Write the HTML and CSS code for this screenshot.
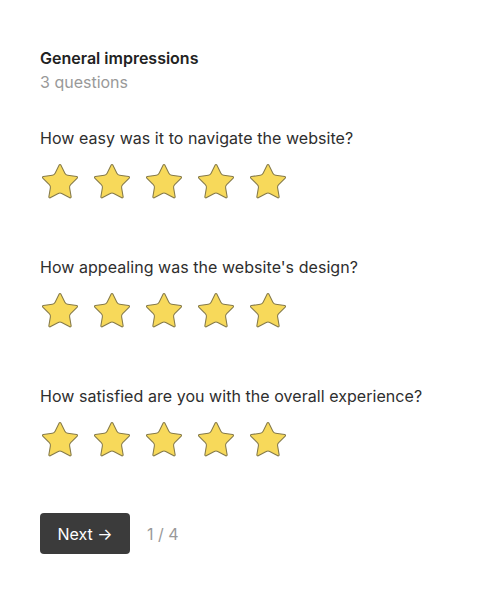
FILE: index.html
```html
<!DOCTYPE html>
<html>
<head>
<meta charset="utf-8">
<link rel="stylesheet" href="styles.css">
</head>
<body>
<main class="survey">
  <header class="head">
    <h1 class="title">General impressions</h1>
    <p class="sub">3 questions</p>
  </header>
  <section class="q">
    <p class="q-text">How easy was it to navigate the website?</p>
    <div class="stars">
      <svg class="star" viewBox="0 0 24 24"><path d="M11.525 2.295a.53.53 0 0 1 .95 0l2.31 4.679a2.123 2.123 0 0 0 1.595 1.16l5.166.756a.53.53 0 0 1 .294.904l-3.736 3.638a2.123 2.123 0 0 0-.611 1.878l.882 5.14a.53.53 0 0 1-.771.56l-4.618-2.428a2.122 2.122 0 0 0-1.973 0L6.396 21.01a.53.53 0 0 1-.77-.56l.881-5.139a2.122 2.122 0 0 0-.611-1.879L2.16 9.795a.53.53 0 0 1 .294-.906l5.165-.755a2.122 2.122 0 0 0 1.597-1.160z"/></svg>
      <svg class="star" viewBox="0 0 24 24"><path d="M11.525 2.295a.53.53 0 0 1 .95 0l2.31 4.679a2.123 2.123 0 0 0 1.595 1.16l5.166.756a.53.53 0 0 1 .294.904l-3.736 3.638a2.123 2.123 0 0 0-.611 1.878l.882 5.14a.53.53 0 0 1-.771.56l-4.618-2.428a2.122 2.122 0 0 0-1.973 0L6.396 21.01a.53.53 0 0 1-.77-.56l.881-5.139a2.122 2.122 0 0 0-.611-1.879L2.16 9.795a.53.53 0 0 1 .294-.906l5.165-.755a2.122 2.122 0 0 0 1.597-1.160z"/></svg>
      <svg class="star" viewBox="0 0 24 24"><path d="M11.525 2.295a.53.53 0 0 1 .95 0l2.31 4.679a2.123 2.123 0 0 0 1.595 1.16l5.166.756a.53.53 0 0 1 .294.904l-3.736 3.638a2.123 2.123 0 0 0-.611 1.878l.882 5.14a.53.53 0 0 1-.771.56l-4.618-2.428a2.122 2.122 0 0 0-1.973 0L6.396 21.01a.53.53 0 0 1-.77-.56l.881-5.139a2.122 2.122 0 0 0-.611-1.879L2.16 9.795a.53.53 0 0 1 .294-.906l5.165-.755a2.122 2.122 0 0 0 1.597-1.160z"/></svg>
      <svg class="star" viewBox="0 0 24 24"><path d="M11.525 2.295a.53.53 0 0 1 .95 0l2.31 4.679a2.123 2.123 0 0 0 1.595 1.16l5.166.756a.53.53 0 0 1 .294.904l-3.736 3.638a2.123 2.123 0 0 0-.611 1.878l.882 5.14a.53.53 0 0 1-.771.56l-4.618-2.428a2.122 2.122 0 0 0-1.973 0L6.396 21.01a.53.53 0 0 1-.77-.56l.881-5.139a2.122 2.122 0 0 0-.611-1.879L2.16 9.795a.53.53 0 0 1 .294-.906l5.165-.755a2.122 2.122 0 0 0 1.597-1.160z"/></svg>
      <svg class="star" viewBox="0 0 24 24"><path d="M11.525 2.295a.53.53 0 0 1 .95 0l2.31 4.679a2.123 2.123 0 0 0 1.595 1.16l5.166.756a.53.53 0 0 1 .294.904l-3.736 3.638a2.123 2.123 0 0 0-.611 1.878l.882 5.14a.53.53 0 0 1-.771.56l-4.618-2.428a2.122 2.122 0 0 0-1.973 0L6.396 21.01a.53.53 0 0 1-.77-.56l.881-5.139a2.122 2.122 0 0 0-.611-1.879L2.16 9.795a.53.53 0 0 1 .294-.906l5.165-.755a2.122 2.122 0 0 0 1.597-1.160z"/></svg>
    </div>
  </section>
  <section class="q">
    <p class="q-text">How appealing was the website's design?</p>
    <div class="stars">
      <svg class="star" viewBox="0 0 24 24"><path d="M11.525 2.295a.53.53 0 0 1 .95 0l2.31 4.679a2.123 2.123 0 0 0 1.595 1.16l5.166.756a.53.53 0 0 1 .294.904l-3.736 3.638a2.123 2.123 0 0 0-.611 1.878l.882 5.14a.53.53 0 0 1-.771.56l-4.618-2.428a2.122 2.122 0 0 0-1.973 0L6.396 21.01a.53.53 0 0 1-.77-.56l.881-5.139a2.122 2.122 0 0 0-.611-1.879L2.16 9.795a.53.53 0 0 1 .294-.906l5.165-.755a2.122 2.122 0 0 0 1.597-1.160z"/></svg>
      <svg class="star" viewBox="0 0 24 24"><path d="M11.525 2.295a.53.53 0 0 1 .95 0l2.31 4.679a2.123 2.123 0 0 0 1.595 1.16l5.166.756a.53.53 0 0 1 .294.904l-3.736 3.638a2.123 2.123 0 0 0-.611 1.878l.882 5.14a.53.53 0 0 1-.771.56l-4.618-2.428a2.122 2.122 0 0 0-1.973 0L6.396 21.01a.53.53 0 0 1-.77-.56l.881-5.139a2.122 2.122 0 0 0-.611-1.879L2.16 9.795a.53.53 0 0 1 .294-.906l5.165-.755a2.122 2.122 0 0 0 1.597-1.160z"/></svg>
      <svg class="star" viewBox="0 0 24 24"><path d="M11.525 2.295a.53.53 0 0 1 .95 0l2.31 4.679a2.123 2.123 0 0 0 1.595 1.16l5.166.756a.53.53 0 0 1 .294.904l-3.736 3.638a2.123 2.123 0 0 0-.611 1.878l.882 5.14a.53.53 0 0 1-.771.56l-4.618-2.428a2.122 2.122 0 0 0-1.973 0L6.396 21.01a.53.53 0 0 1-.77-.56l.881-5.139a2.122 2.122 0 0 0-.611-1.879L2.16 9.795a.53.53 0 0 1 .294-.906l5.165-.755a2.122 2.122 0 0 0 1.597-1.160z"/></svg>
      <svg class="star" viewBox="0 0 24 24"><path d="M11.525 2.295a.53.53 0 0 1 .95 0l2.31 4.679a2.123 2.123 0 0 0 1.595 1.16l5.166.756a.53.53 0 0 1 .294.904l-3.736 3.638a2.123 2.123 0 0 0-.611 1.878l.882 5.14a.53.53 0 0 1-.771.56l-4.618-2.428a2.122 2.122 0 0 0-1.973 0L6.396 21.01a.53.53 0 0 1-.77-.56l.881-5.139a2.122 2.122 0 0 0-.611-1.879L2.16 9.795a.53.53 0 0 1 .294-.906l5.165-.755a2.122 2.122 0 0 0 1.597-1.160z"/></svg>
      <svg class="star" viewBox="0 0 24 24"><path d="M11.525 2.295a.53.53 0 0 1 .95 0l2.31 4.679a2.123 2.123 0 0 0 1.595 1.16l5.166.756a.53.53 0 0 1 .294.904l-3.736 3.638a2.123 2.123 0 0 0-.611 1.878l.882 5.14a.53.53 0 0 1-.771.56l-4.618-2.428a2.122 2.122 0 0 0-1.973 0L6.396 21.01a.53.53 0 0 1-.77-.56l.881-5.139a2.122 2.122 0 0 0-.611-1.879L2.16 9.795a.53.53 0 0 1 .294-.906l5.165-.755a2.122 2.122 0 0 0 1.597-1.160z"/></svg>
    </div>
  </section>
  <section class="q">
    <p class="q-text">How satisfied are you with the overall experience?</p>
    <div class="stars">
      <svg class="star" viewBox="0 0 24 24"><path d="M11.525 2.295a.53.53 0 0 1 .95 0l2.31 4.679a2.123 2.123 0 0 0 1.595 1.16l5.166.756a.53.53 0 0 1 .294.904l-3.736 3.638a2.123 2.123 0 0 0-.611 1.878l.882 5.14a.53.53 0 0 1-.771.56l-4.618-2.428a2.122 2.122 0 0 0-1.973 0L6.396 21.01a.53.53 0 0 1-.77-.56l.881-5.139a2.122 2.122 0 0 0-.611-1.879L2.16 9.795a.53.53 0 0 1 .294-.906l5.165-.755a2.122 2.122 0 0 0 1.597-1.160z"/></svg>
      <svg class="star" viewBox="0 0 24 24"><path d="M11.525 2.295a.53.53 0 0 1 .95 0l2.31 4.679a2.123 2.123 0 0 0 1.595 1.16l5.166.756a.53.53 0 0 1 .294.904l-3.736 3.638a2.123 2.123 0 0 0-.611 1.878l.882 5.14a.53.53 0 0 1-.771.56l-4.618-2.428a2.122 2.122 0 0 0-1.973 0L6.396 21.01a.53.53 0 0 1-.77-.56l.881-5.139a2.122 2.122 0 0 0-.611-1.879L2.16 9.795a.53.53 0 0 1 .294-.906l5.165-.755a2.122 2.122 0 0 0 1.597-1.160z"/></svg>
      <svg class="star" viewBox="0 0 24 24"><path d="M11.525 2.295a.53.53 0 0 1 .95 0l2.31 4.679a2.123 2.123 0 0 0 1.595 1.16l5.166.756a.53.53 0 0 1 .294.904l-3.736 3.638a2.123 2.123 0 0 0-.611 1.878l.882 5.14a.53.53 0 0 1-.771.56l-4.618-2.428a2.122 2.122 0 0 0-1.973 0L6.396 21.01a.53.53 0 0 1-.77-.56l.881-5.139a2.122 2.122 0 0 0-.611-1.879L2.16 9.795a.53.53 0 0 1 .294-.906l5.165-.755a2.122 2.122 0 0 0 1.597-1.160z"/></svg>
      <svg class="star" viewBox="0 0 24 24"><path d="M11.525 2.295a.53.53 0 0 1 .95 0l2.31 4.679a2.123 2.123 0 0 0 1.595 1.16l5.166.756a.53.53 0 0 1 .294.904l-3.736 3.638a2.123 2.123 0 0 0-.611 1.878l.882 5.14a.53.53 0 0 1-.771.56l-4.618-2.428a2.122 2.122 0 0 0-1.973 0L6.396 21.01a.53.53 0 0 1-.77-.56l.881-5.139a2.122 2.122 0 0 0-.611-1.879L2.16 9.795a.53.53 0 0 1 .294-.906l5.165-.755a2.122 2.122 0 0 0 1.597-1.160z"/></svg>
      <svg class="star" viewBox="0 0 24 24"><path d="M11.525 2.295a.53.53 0 0 1 .95 0l2.31 4.679a2.123 2.123 0 0 0 1.595 1.16l5.166.756a.53.53 0 0 1 .294.904l-3.736 3.638a2.123 2.123 0 0 0-.611 1.878l.882 5.14a.53.53 0 0 1-.771.56l-4.618-2.428a2.122 2.122 0 0 0-1.973 0L6.396 21.01a.53.53 0 0 1-.77-.56l.881-5.139a2.122 2.122 0 0 0-.611-1.879L2.16 9.795a.53.53 0 0 1 .294-.906l5.165-.755a2.122 2.122 0 0 0 1.597-1.160z"/></svg>
    </div>
  </section>
  <footer class="foot">
    <button class="next">Next →</button>
    <span class="page">1 / 4</span>
  </footer>
</main>
</body>
</html>
```
FILE: styles.css
```css
html, body {
  margin: 0;
  padding: 0;
  background: #ffffff;
}
body {
  font-family: Inter, "Liberation Sans", sans-serif;
  font-size: 16px;
  line-height: 24px;
  color: #333333;
}
.survey {
  padding: 46px 40px 0 40px;
}
.head {
  margin-bottom: 32px;
}
.title {
  margin: 0;
  font-size: 16px;
  line-height: 24px;
  font-weight: 600;
  color: #222222;
}
.sub {
  margin: 0;
  color: #999999;
}
.q {
  margin-bottom: 52px;
}
.q-text {
  margin: 0 0 11px 0;
  color: #2e2e2e;
  letter-spacing: 0.05px;
}
.stars {
  display: flex;
  gap: 10px;
  margin-left: -1px;
}
.star {
  width: 42px;
  height: 42px;
  display: block;
}
.star path {
  fill: #f7d95a;
  stroke: #857a4a;
  stroke-width: 0.6;
  stroke-linejoin: round;
}
.foot {
  display: flex;
  align-items: center;
  gap: 17px;
}
.next {
  width: 90px;
  height: 41px;
  border: none;
  border-radius: 4px;
  background: #3b3b3b;
  color: #ffffff;
  font-family: Inter, "Liberation Sans", sans-serif;
  font-size: 16px;
  padding: 0;
}
.page {
  color: #999999;
}
```
